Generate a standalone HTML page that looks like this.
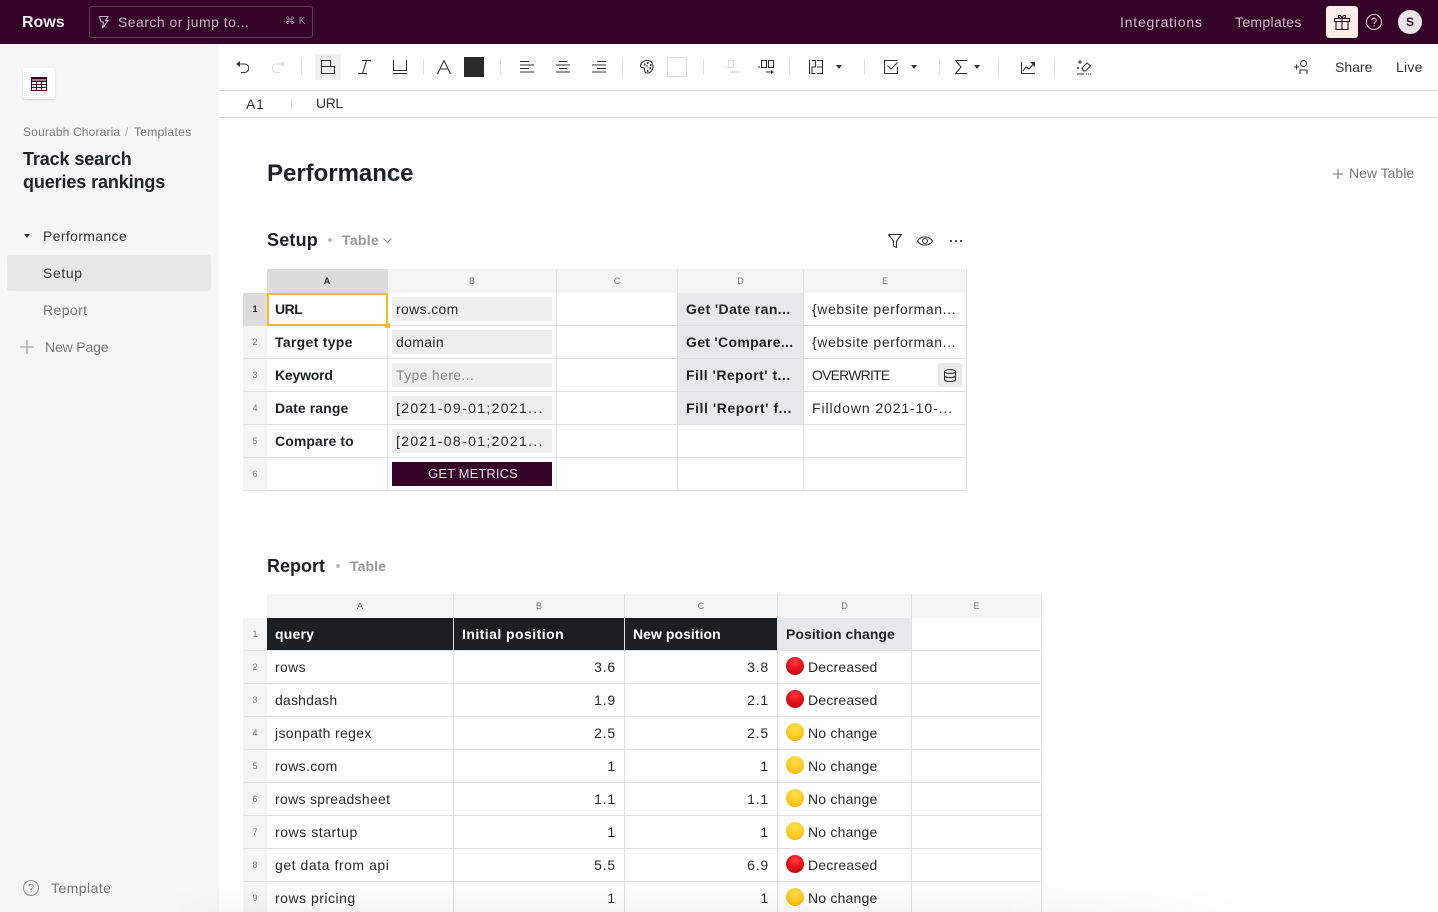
<!DOCTYPE html>
<html><head><meta charset="utf-8"><title>Rows</title>
<style>
*{box-sizing:border-box}
html,body{margin:0;padding:0;width:1438px;height:912px;overflow:hidden;background:#fff;font-family:"Liberation Sans",sans-serif;color:#222}
.a,.t,.c,.r,.e{position:absolute}
.t,.c,.r{white-space:nowrap;font-size:14px;line-height:16px;letter-spacing:.35px;color:#2a2a2a}
.b{font-weight:700;letter-spacing:.4px;color:#1f2224}
.h{position:absolute;font-size:9px;line-height:12px;color:#777;text-align:center;top:0}
.n{position:absolute;font-size:9px;line-height:12px;color:#777;text-align:center;width:24px;left:243px}
.r{text-align:right;letter-spacing:.8px}
.l{position:absolute;background:#e0e0e0}
.g{position:absolute;background:#f5f5f5}
.ip{position:absolute;left:392px;width:160px;height:24px;background:#eee}
.e{width:18px;height:18px;border-radius:50%;left:786px}
.red{background:radial-gradient(circle at 50% 28%,#ff3b3b 0,#e3101c 50%,#a90f16 100%)}
.yel{background:radial-gradient(circle at 50% 28%,#ffe04d 0,#fdc81e 60%,#eda90e 100%)}
svg{position:absolute;fill:none;stroke:#333;stroke-width:1.1}
</style></head><body>

<!-- top bar -->
<div class="a" style="left:0;top:0;width:1438px;height:44px;background:#350228"></div>
<div class="t" style="left:22px;top:14px;font-size:16px;line-height:18px;font-weight:700;color:#f5eef2;letter-spacing:0">Rows</div>
<div class="a" style="left:89px;top:6px;width:224px;height:32px;border:1px solid #5f3a55;border-radius:3px"></div>
<svg style="left:98px;top:15px;stroke:#c9b4c2" width="12" height="14" viewBox="0 0 12 14"><path d="M1.500 1.500h8.500L7.500 5.500h2.500L4.500 13l1-6H3z"/></svg>
<div class="t" style="left:118px;top:14px;color:#c3afbd;letter-spacing:.46px">Search or jump to...</div>
<div class="t" style="left:285px;top:16px;font-size:10px;line-height:12px;color:#a58fa0;letter-spacing:.5px">⌘ K</div>
<div class="t" style="left:1120px;top:14px;color:#cdbcc8;letter-spacing:.8px">Integrations</div>
<div class="t" style="left:1235px;top:14px;color:#cdbcc8;letter-spacing:.32px">Templates</div>
<div class="a" style="left:1326px;top:6px;width:32px;height:32px;background:#ffeeea;border-radius:3px"></div>
<svg style="left:1334px;top:14px;stroke:#2b0a22" width="16" height="16" viewBox="0 0 16 16"><path d="M.5 4.500h15v3H.5zM2 7.500v8h12v-8M8 4.500v11M8 4.500C5 4.500 4 3 4.500 1.800 5.500.5 7.500 2 8 4.500 8.500 2 10.500.5 11.500 1.800 12 3 11 4.500 8 4.500"/></svg>
<svg style="left:1366px;top:14px;stroke:#cdbcc8" width="16" height="16" viewBox="0 0 16 16"><circle cx="8" cy="8" r="7.500"/><path d="M5.800 6.200C5.800 3.500 10.300 3.500 10.300 6.200 10.300 8 8 8 8 10M8 11.300v1.200"/></svg>
<div class="a" style="left:1398px;top:10px;width:24px;height:24px;border-radius:50%;background:#ebe5ea"></div>
<div class="t" style="left:1398px;top:14px;width:24px;text-align:center;font-size:12px;font-weight:700;color:#33142b;letter-spacing:0">S</div>

<!-- sidebar -->
<div class="a" style="left:0;top:44px;width:219px;height:868px;background:#f6f6f6"></div>
<div class="a" style="left:23px;top:68px;width:32px;height:31px;background:#fff;border-radius:3px;box-shadow:0 1px 2px rgba(0,0,0,.13)"></div>
<svg style="left:31px;top:77px;stroke:#350228" width="16" height="14" viewBox="0 0 16 14"><path d="M.5.500h15v13H.5zM.5 4.500h15M.5 7.500h15M.5 10.500h15M5.500 4.500v9M10.500 4.500v9"/><path d="M.5 1.500h15M.5 3h15"/></svg>
<div class="t" style="left:23px;top:124px;font-size:12px;color:#777;letter-spacing:.16px">Sourabh Choraria</div>
<div class="t" style="left:125px;top:124px;font-size:12px;color:#aaa">/</div>
<div class="t" style="left:134px;top:124px;font-size:12px;color:#777;letter-spacing:.3px">Templates</div>
<div class="t b" style="left:23px;top:148px;font-size:18px;line-height:23px;letter-spacing:-.12px">Track search<br>queries rankings</div>
<div class="a" style="left:24px;top:234px;border-left:3.500px solid transparent;border-right:3.500px solid transparent;border-top:4px solid #333"></div>
<div class="t" style="left:43px;top:228px;letter-spacing:.35px;color:#333">Performance</div>
<div class="a" style="left:7px;top:255px;width:204px;height:36px;background:#e7e7e7;border-radius:3px"></div>
<div class="t" style="left:43px;top:265px;letter-spacing:.6px;color:#333">Setup</div>
<div class="t" style="left:43px;top:302px;letter-spacing:.4px;color:#777">Report</div>
<svg style="left:20px;top:340px;stroke:#999" width="14" height="14" viewBox="0 0 14 14"><path d="M7 0v14M0 7h14"/></svg>
<div class="t" style="left:45px;top:339px;letter-spacing:-.15px;color:#777">New Page</div>
<svg style="left:23px;top:880px;stroke:#999" width="16" height="16" viewBox="0 0 16 16"><circle cx="8" cy="8" r="7.500"/><path d="M5.800 6.200C5.800 3.500 10.300 3.500 10.300 6.200 10.300 8 8 8 8 10M8 11.300v1.200"/></svg>
<div class="t" style="left:51px;top:880px;letter-spacing:.45px;color:#777">Template</div>

<!-- toolbar -->
<div class="l" style="left:219px;top:90px;width:1219px;height:1px"></div>
<div class="l" style="left:219px;top:117px;width:1219px;height:1px"></div>
<svg style="left:236px;top:60px" width="13" height="14" viewBox="0 0 13 14"><path d="M1 4h7.500a3.800 3.800 0 0 1 0 8.500H5"/><path d="M4 1v6L0 4z" fill="#333" stroke="none"/></svg>
<svg style="left:272px;top:60px;stroke:#ddd" width="13" height="14" viewBox="0 0 13 14"><path d="M12 4H4.500a3.800 3.800 0 0 0 0 8.500H8"/><path d="M9 1v6l4-3z" fill="#ddd" stroke="none"/></svg>
<div class="l" style="left:301px;top:59px;width:1px;height:16px"></div>
<div class="a" style="left:315px;top:54px;width:26px;height:26px;background:#efefef"></div>
<svg style="left:321px;top:60px" width="14" height="14" viewBox="0 0 14 14"><path d="M.5.500h9v6h4v7H.5zM.5 6.500h9"/></svg>
<svg style="left:358px;top:60px" width="13" height="14" viewBox="0 0 13 14"><path d="M4 .5h9M0 13.500h9M8.500.5L4.500 13.500"/></svg>
<svg style="left:393px;top:60px" width="14" height="14" viewBox="0 0 14 14"><path d="M.5 0v10.500h13V0M0 13.500h14"/></svg>
<div class="l" style="left:423px;top:59px;width:1px;height:16px"></div>
<svg style="left:437px;top:60px" width="14" height="14" viewBox="0 0 14 14"><path d="M.5 14L7 .5 13.500 14M3 9h8"/></svg>
<div class="a" style="left:464px;top:57px;width:20px;height:20px;background:#2a2a2a"></div>
<div class="l" style="left:500px;top:59px;width:1px;height:16px"></div>
<svg style="left:520px;top:61px" width="14" height="12" viewBox="0 0 14 12"><path d="M0 .5h9M0 4h14M0 7.500h9M0 11h14"/></svg>
<svg style="left:556px;top:61px" width="14" height="12" viewBox="0 0 14 12"><path d="M3 .5h8M0 4h14M3 7.500h8M0 11h14"/></svg>
<svg style="left:592px;top:61px" width="14" height="12" viewBox="0 0 14 12"><path d="M5 .5h9M0 4h14M5 7.500h9M0 11h14"/></svg>
<div class="l" style="left:622px;top:59px;width:1px;height:16px"></div>
<svg style="left:640px;top:60px" width="14" height="14" viewBox="0 0 14 14"><path d="M7 .5C3 .5.500 3.500.500 6c0 2 2.500 1.500 3.500 2s0 2 1 4 7 1.500 8-4.500C13.500 3.500 11 .5 7 .5z"/><path d="M4 4.500h1.500M7 3h1.500M10 5h1.500M9.500 8h1.500M7 11h1.500M6.500 6h1" stroke-width="2"/></svg>
<div class="a" style="left:667px;top:57px;width:20px;height:20px;border:1px solid #ddd"></div>
<div class="l" style="left:703px;top:59px;width:1px;height:16px"></div>
<svg style="left:722px;top:60px;stroke:#ddd" width="17" height="15" viewBox="0 0 17 15"><path d="M6.500.5h5v7h-5zM2 7h2M17 12H10"/><path d="M11 10v4l-3-2z" fill="#ddd" stroke="none"/></svg>
<svg style="left:758px;top:60px" width="17" height="15" viewBox="0 0 17 15"><path d="M3.500.5h5v7h-5zM10.500.5h5v7h-5zM0 7h2M8 12h6"/><path d="M13 10v4l3-2z" fill="#333" stroke="none"/></svg>
<div class="l" style="left:789px;top:59px;width:1px;height:16px"></div>
<svg style="left:809px;top:60px" width="14" height="14" viewBox="0 0 14 14"><path d="M.5 0v14M3 .5h3.500v6.500H3v6.500h3.500M8 .5h5.500v13H8M8 7h5.500"/></svg>
<div class="a" style="left:836px;top:65px;border-left:3.500px solid transparent;border-right:3.500px solid transparent;border-top:4px solid #333"></div>
<div class="l" style="left:864px;top:59px;width:1px;height:16px"></div>
<svg style="left:884px;top:60px" width="14" height="14" viewBox="0 0 14 14"><path d="M13.500 7v6.500H.5V.500h13M3.500 5.500l3.500 3.500 6.500-6.500"/></svg>
<div class="a" style="left:911px;top:65px;border-left:3.500px solid transparent;border-right:3.500px solid transparent;border-top:4px solid #333"></div>
<div class="l" style="left:939px;top:59px;width:1px;height:16px"></div>
<svg style="left:955px;top:60px" width="12" height="14" viewBox="0 0 12 14"><path d="M12 .5H.5L6 7 .5 13.500H12"/></svg>
<div class="a" style="left:974px;top:65px;border-left:3.500px solid transparent;border-right:3.500px solid transparent;border-top:4px solid #333"></div>
<div class="l" style="left:998px;top:59px;width:1px;height:16px"></div>
<svg style="left:1021px;top:62px" width="14" height="12" viewBox="0 0 14 12"><path d="M.5 0v11.500H14M2 9l3-4 3 2 4-4.500"/><path d="M9 0h5v5z" fill="#333" stroke="none"/></svg>
<div class="l" style="left:1054px;top:59px;width:1px;height:16px"></div>
<svg style="left:1077px;top:60px" width="15" height="15" viewBox="0 0 15 15"><path d="M5 8l5-5 3.500 3-5 5h-2zM0 14h7"/><path d="M9 14h6" stroke-dasharray="1 1"/><path d="M3 0v4M1 2h4M1 7v2M0 8h2"/></svg>
<svg style="left:1294px;top:60px" width="15" height="14" viewBox="0 0 15 14"><circle cx="9.500" cy="3.500" r="3"/><path d="M0 7h5M2.500 4.500v5M6 14v-4h7v4"/></svg>
<div class="t" style="left:1335px;top:59px;color:#333;letter-spacing:0">Share</div>
<div class="t" style="left:1396px;top:59px;color:#333;letter-spacing:.25px">Live</div>

<!-- formula bar -->
<div class="t" style="left:246px;top:96px;letter-spacing:.8px;color:#333">A1</div>
<div class="l" style="left:291px;top:98px;width:1px;height:11px"></div>
<div class="t" style="left:316px;top:95px;letter-spacing:-.4px;color:#333">URL</div>

<!-- headings -->
<div class="t b" style="left:267px;top:160px;font-size:24px;line-height:28px;letter-spacing:-.02px">Performance</div>
<svg style="left:1333px;top:169px;stroke:#777" width="10" height="10" viewBox="0 0 10 10"><path d="M5 0v10M0 5h10"/></svg>
<div class="t" style="left:1349px;top:165px;letter-spacing:0;color:#777">New Table</div>

<div class="t b" style="left:267px;top:230px;font-size:18px;line-height:20px;letter-spacing:.2px">Setup</div>
<div class="a" style="left:328px;top:238px;width:4px;height:4px;border-radius:50%;background:#bbb"></div>
<div class="t b" style="left:342px;top:232px;color:#999;font-size:14px;letter-spacing:.3px">Table</div>
<svg style="left:383px;top:238px;stroke:#888" width="9" height="6" viewBox="0 0 9 6"><path d="M.5.500l4 4 4-4"/></svg>
<svg style="left:888px;top:234px" width="14" height="14" viewBox="0 0 14 14"><path d="M.5.500h13L8.500 7v6.500L5.500 12V7z"/></svg>
<svg style="left:917px;top:235px" width="16" height="12" viewBox="0 0 16 12"><path d="M.5 6C4 .5 12 .5 15.500 6 12 11.500 4 11.500.5 6z"/><circle cx="8" cy="6" r="2.500"/></svg>
<div class="a" style="left:950px;top:240px;width:2px;height:2px;background:#555;box-shadow:5px 0 #555,10px 0 #555"></div>

<!-- setup table -->
<div class="g" style="left:267px;top:269px;width:700px;height:24px"></div>
<div class="a" style="left:267px;top:269px;width:121px;height:24px;background:#dcdcdc"></div>
<div class="g" style="left:243px;top:293px;width:24px;height:198px"></div>
<div class="a" style="left:243px;top:293px;width:24px;height:33px;background:#dcdcdc"></div>
<div class="a" style="left:678px;top:293px;width:125px;height:132px;background:#e7e8ea"></div>
<div class="l" style="left:243px;top:325px;width:724px;height:1px"></div>
<div class="l" style="left:243px;top:358px;width:724px;height:1px"></div>
<div class="l" style="left:243px;top:391px;width:724px;height:1px"></div>
<div class="l" style="left:243px;top:424px;width:724px;height:1px"></div>
<div class="l" style="left:243px;top:457px;width:724px;height:1px"></div>
<div class="l" style="left:243px;top:490px;width:724px;height:1px"></div>
<div class="l" style="left:387px;top:269px;width:1px;height:222px"></div>
<div class="l" style="left:556px;top:269px;width:1px;height:222px"></div>
<div class="l" style="left:677px;top:269px;width:1px;height:222px"></div>
<div class="l" style="left:803px;top:269px;width:1px;height:222px"></div>
<div class="l" style="left:966px;top:269px;width:1px;height:222px"></div>
<div class="h" style="left:267px;top:275px;width:120px;color:#222;font-weight:700">A</div>
<div class="h" style="left:388px;top:275px;width:168px">B</div>
<div class="h" style="left:557px;top:275px;width:120px">C</div>
<div class="h" style="left:678px;top:275px;width:125px">D</div>
<div class="h" style="left:804px;top:275px;width:162px">E</div>
<div class="n" style="top:303px;color:#222;font-weight:700">1</div>
<div class="n" style="top:336px">2</div>
<div class="n" style="top:369px">3</div>
<div class="n" style="top:402px">4</div>
<div class="n" style="top:435px">5</div>
<div class="n" style="top:468px">6</div>
<div class="t b" style="left:275px;top:301px;letter-spacing:-.5px">URL</div>
<div class="t b" style="left:275px;top:334px;letter-spacing:.3px">Target type</div>
<div class="t b" style="left:275px;top:367px;letter-spacing:-.2px">Keyword</div>
<div class="t b" style="left:275px;top:400px;letter-spacing:.1px">Date range</div>
<div class="t b" style="left:275px;top:433px;letter-spacing:.1px">Compare to</div>
<div class="ip" style="top:297px"></div><div class="ip" style="top:330px"></div><div class="ip" style="top:363px"></div><div class="ip" style="top:396px"></div><div class="ip" style="top:429px"></div>
<div class="t" style="left:396px;top:301px">rows.com</div>
<div class="t" style="left:396px;top:334px">domain</div>
<div class="t" style="left:396px;top:367px;color:#888;letter-spacing:.35px">Type here...</div>
<div class="t" style="left:396px;top:400px;letter-spacing:1.35px">[2021-09-01;2021...</div>
<div class="t" style="left:396px;top:433px;letter-spacing:1.35px">[2021-08-01;2021...</div>
<div class="a" style="left:392px;top:462px;width:160px;height:24px;background:#350228"></div>
<div class="t" style="left:392px;top:466px;width:162px;text-align:center;color:#e8dde5;font-size:13px;letter-spacing:.1px">GET METRICS</div>
<div class="a" style="left:267px;top:293px;width:121px;height:33px;border:2px solid #fdb92b"></div>
<div class="a" style="left:385px;top:323px;width:5px;height:5px;background:#fdb92b"></div>
<div class="t b" style="left:686px;top:301px;letter-spacing:.4px">Get 'Date ran...</div>
<div class="t b" style="left:686px;top:334px;letter-spacing:.3px">Get 'Compare...</div>
<div class="t b" style="left:686px;top:367px;letter-spacing:.48px">Fill 'Report' t...</div>
<div class="t b" style="left:686px;top:400px;letter-spacing:.55px">Fill 'Report' f...</div>
<div class="t" style="left:812px;top:301px;letter-spacing:.6px">{website performan...</div>
<div class="t" style="left:812px;top:334px;letter-spacing:.6px">{website performan...</div>
<div class="t" style="left:812px;top:367px;letter-spacing:-.8px">OVERWRITE</div>
<div class="t" style="left:812px;top:400px;letter-spacing:.9px">Filldown 2021-10-...</div>
<div class="a" style="left:938px;top:363px;width:24px;height:24px;background:#eaeaea;border-radius:2px"></div>
<svg style="left:944px;top:369px" width="12" height="13" viewBox="0 0 12 13"><ellipse cx="6" cy="2.500" rx="5.500" ry="2"/><path d="M.5 2.500v8c0 2.700 11 2.700 11 0v-8M.5 6.500c0 2.700 11 2.700 11 0"/></svg>

<!-- report heading -->
<div class="t b" style="left:267px;top:556px;font-size:18px;line-height:20px;letter-spacing:0">Report</div>
<div class="a" style="left:336px;top:564px;width:4px;height:4px;border-radius:50%;background:#bbb"></div>
<div class="t b" style="left:350px;top:558px;color:#999;letter-spacing:.1px">Table</div>

<!-- report table -->
<div class="g" style="left:267px;top:594px;width:775px;height:24px"></div>
<div class="g" style="left:243px;top:618px;width:24px;height:294px"></div>
<div class="a" style="left:267px;top:618px;width:510px;height:33px;background:#1c1f21"></div>
<div class="a" style="left:778px;top:618px;width:133px;height:32px;background:#e7e8ea"></div>
<div class="l" style="left:243px;top:650px;width:799px;height:1px"></div>
<div class="l" style="left:243px;top:683px;width:799px;height:1px"></div>
<div class="l" style="left:243px;top:716px;width:799px;height:1px"></div>
<div class="l" style="left:243px;top:749px;width:799px;height:1px"></div>
<div class="l" style="left:243px;top:782px;width:799px;height:1px"></div>
<div class="l" style="left:243px;top:815px;width:799px;height:1px"></div>
<div class="l" style="left:243px;top:848px;width:799px;height:1px"></div>
<div class="l" style="left:243px;top:881px;width:799px;height:1px"></div>
<div class="l" style="left:453px;top:594px;width:1px;height:318px"></div>
<div class="l" style="left:624px;top:594px;width:1px;height:318px"></div>
<div class="l" style="left:777px;top:594px;width:1px;height:318px"></div>
<div class="l" style="left:911px;top:594px;width:1px;height:318px"></div>
<div class="l" style="left:1041px;top:594px;width:1px;height:318px"></div>
<div class="h" style="left:267px;top:600px;width:186px">A</div>
<div class="h" style="left:454px;top:600px;width:170px">B</div>
<div class="h" style="left:625px;top:600px;width:152px">C</div>
<div class="h" style="left:778px;top:600px;width:133px">D</div>
<div class="h" style="left:912px;top:600px;width:129px">E</div>
<div class="n" style="top:628px">1</div><div class="n" style="top:661px">2</div><div class="n" style="top:694px">3</div><div class="n" style="top:727px">4</div><div class="n" style="top:760px">5</div><div class="n" style="top:793px">6</div><div class="n" style="top:826px">7</div><div class="n" style="top:859px">8</div><div class="n" style="top:892px">9</div>
<div class="t b" style="left:275px;top:626px;color:#fff;letter-spacing:.2px">query</div>
<div class="t b" style="left:462px;top:626px;color:#fff;letter-spacing:.45px">Initial position</div>
<div class="t b" style="left:633px;top:626px;color:#fff;letter-spacing:.05px">New position</div>
<div class="t b" style="left:786px;top:626px;letter-spacing:.05px">Position change</div>

<div class="t" style="left:275px;top:659px">rows</div>
<div class="t" style="left:275px;top:692px;letter-spacing:.2px">dashdash</div>
<div class="t" style="left:275px;top:725px;letter-spacing:.35px">jsonpath regex</div>
<div class="t" style="left:275px;top:758px">rows.com</div>
<div class="t" style="left:275px;top:791px;letter-spacing:.3px">rows spreadsheet</div>
<div class="t" style="left:275px;top:824px;letter-spacing:.55px">rows startup</div>
<div class="t" style="left:275px;top:857px;letter-spacing:.55px">get data from api</div>
<div class="t" style="left:275px;top:890px;letter-spacing:.5px">rows pricing</div>

<div class="r" style="right:822px;top:659px">3.6</div>
<div class="r" style="right:822px;top:692px">1.9</div>
<div class="r" style="right:822px;top:725px">2.5</div>
<div class="r" style="right:822px;top:758px">1</div>
<div class="r" style="right:822px;top:791px">1.1</div>
<div class="r" style="right:822px;top:824px">1</div>
<div class="r" style="right:822px;top:857px">5.5</div>
<div class="r" style="right:822px;top:890px">1</div>

<div class="r" style="right:669px;top:659px">3.8</div>
<div class="r" style="right:669px;top:692px">2.1</div>
<div class="r" style="right:669px;top:725px">2.5</div>
<div class="r" style="right:669px;top:758px">1</div>
<div class="r" style="right:669px;top:791px">1.1</div>
<div class="r" style="right:669px;top:824px">1</div>
<div class="r" style="right:669px;top:857px">6.9</div>
<div class="r" style="right:669px;top:890px">1</div>

<div class="e red" style="top:657px"></div><div class="t" style="left:808px;top:659px;letter-spacing:.2px">Decreased</div>
<div class="e red" style="top:690px"></div><div class="t" style="left:808px;top:692px;letter-spacing:.2px">Decreased</div>
<div class="e yel" style="top:723px"></div><div class="t" style="left:808px;top:725px;letter-spacing:.2px">No change</div>
<div class="e yel" style="top:756px"></div><div class="t" style="left:808px;top:758px;letter-spacing:.2px">No change</div>
<div class="e yel" style="top:789px"></div><div class="t" style="left:808px;top:791px;letter-spacing:.2px">No change</div>
<div class="e yel" style="top:822px"></div><div class="t" style="left:808px;top:824px;letter-spacing:.2px">No change</div>
<div class="e red" style="top:855px"></div><div class="t" style="left:808px;top:857px;letter-spacing:.2px">Decreased</div>
<div class="e yel" style="top:888px"></div><div class="t" style="left:808px;top:890px;letter-spacing:.2px">No change</div>

<!-- bottom fade -->
<div class="a" style="left:0;top:884px;width:1438px;height:28px;background:linear-gradient(to bottom,rgba(0,0,0,0),rgba(0,0,0,.045));-webkit-mask-image:linear-gradient(to right,transparent 160px,#000 300px,#000 1000px,transparent 1250px);pointer-events:none"></div>
</body></html>
